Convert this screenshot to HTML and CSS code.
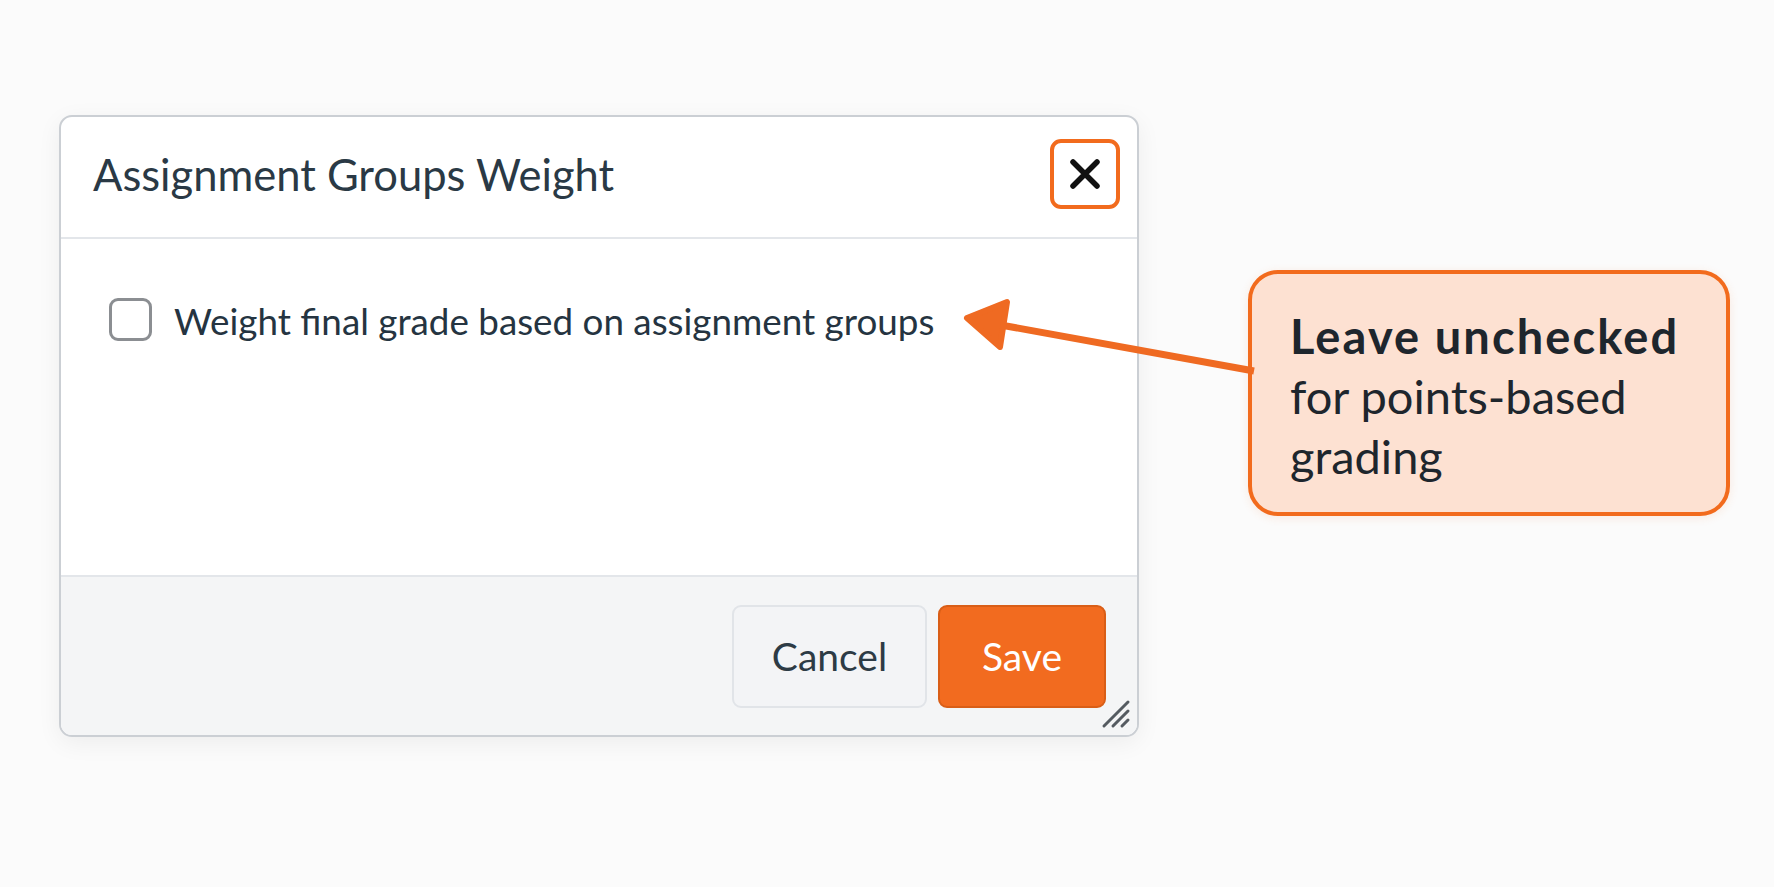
FILE: index.html
```html
<!DOCTYPE html>
<html lang="en">
<head>
  <meta charset="UTF-8">
  <meta name="viewport" content="width=device-width, initial-scale=1.0">
  <title>Assignment Groups Weight</title>
  <link rel="stylesheet" href="styles.css">
</head>
<body>
  <div class="stage">
    <div class="dialog">
      <div class="dialog-header">
        <h2 class="dialog-title">Assignment Groups Weight</h2>
        <button class="close-btn" aria-label="Close">
          <svg width="32" height="32" viewBox="0 0 32 32">
            <path d="M4 4 L28 28 M28 4 L4 28" stroke="#111" stroke-width="5.5" stroke-linecap="round" fill="none"/>
          </svg>
        </button>
      </div>
      <div class="dialog-body">
        <label class="check-row">
          <span class="checkbox"></span>
          <span class="check-label">Weight final grade based on assignment groups</span>
        </label>
      </div>
      <div class="dialog-footer">
        <button class="btn btn-cancel">Cancel</button>
        <button class="btn btn-save">Save</button>
      </div>
      <!-- resize grip in the corner -->
      <svg class="grip" width="30" height="30" viewBox="0 0 30 30">
        <path d="M3 27 L27 3 M12 27 L27 12 M21 27 L27 21" stroke="#555b61" stroke-width="3" stroke-linecap="round"/>
      </svg>
    </div>

    <div class="callout">
      <p><strong>Leave unchecked</strong><br>for points-based<br>grading</p>
    </div>

    <!-- pointer from the note to the checkbox label -->
    <svg class="pointer" width="1774" height="887" viewBox="0 0 1774 887">
      <line x1="995" y1="324" x2="1254" y2="371" stroke="#ef6a22" stroke-width="7"/>
      <polygon points="967,318 1007,302 1000,347" fill="#ef6a22" stroke="#ef6a22" stroke-width="6" stroke-linejoin="round"/>
    </svg>
  </div>
</body>
</html>
```

FILE: styles.css
```css
* {
  box-sizing: border-box;
}
body {
  margin: 0;
  background: #fbfbfb;
  font-family: Lato, "Noto Sans", sans-serif;
  color: #2d3b45;
}
.stage {
  position: relative;
  width: 1774px;
  height: 887px;
  display: flex;
  align-items: flex-start;
  padding: 115px 0 0 59px;
}
.dialog {
  position: relative;
  width: 1080px;
  height: 622px;
  background: #fff;
  border: 2px solid #cbcfd4;
  border-radius: 13px;
  box-shadow: 0 6px 24px rgba(0, 0, 0, 0.06);
  display: flex;
  flex-direction: column;
  overflow: hidden;
}
.dialog-header {
  height: 122px;
  flex: none;
  display: flex;
  align-items: center;
  justify-content: space-between;
  padding: 0 17px 6px 32px;
  border-bottom: 2px solid #e3e6ea;
}
.dialog-title {
  margin: 0;
  font-size: 43.5px;
  font-weight: 400;
  color: #2a3945;
}
.close-btn {
  width: 70px;
  height: 70px;
  border: 4px solid #f26b1d;
  border-radius: 11px;
  background: #fff;
  display: flex;
  align-items: center;
  justify-content: center;
  padding: 0;
}
.dialog-body {
  flex: 1;
  padding: 57px 0 0 48px;
}
.check-row {
  display: flex;
  align-items: center;
  gap: 22px;
}
.checkbox {
  width: 43px;
  height: 43px;
  border: 3px solid #8b8e92;
  border-radius: 9px;
  background: #fff;
}
.check-label {
  font-size: 36.8px;
  color: #253441;
  padding-top: 3px;
}
.dialog-footer {
  height: 160px;
  flex: none;
  background: #f4f5f6;
  border-top: 2px solid #e3e6ea;
  display: flex;
  align-items: center;
  justify-content: flex-end;
  gap: 11px;
  padding: 0 31px 0 0;
}
.btn {
  height: 103px;
  border-radius: 9px;
  font-family: Lato, "Noto Sans", sans-serif;
  font-size: 39px;
  padding: 0;
}
.btn-cancel {
  width: 195px;
  background: #f3f4f6;
  border: 2px solid #e1e4e8;
  color: #2d3b45;
}
.btn-save {
  width: 168px;
  background: #f26b1f;
  border: 2px solid #d95e17;
  color: #fff;
}
.grip {
  position: absolute;
  right: 6px;
  bottom: 6px;
}
.callout {
  width: 482px;
  height: 246px;
  margin: 155px 0 0 109px;
  background: #fde1d2;
  border: 4px solid #f26b1d;
  border-radius: 30px;
  box-shadow: 0 2px 10px rgba(242, 107, 29, 0.12);
  display: flex;
  align-items: center;
  padding: 5px 10px 0 38px;
}
.callout p {
  margin: 0;
  font-size: 47px;
  line-height: 60px;
  color: #1e262d;
  white-space: nowrap;
}
.callout strong {
  font-weight: 700;
  letter-spacing: 2.1px;
}
.pointer {
  position: absolute;
  left: 0;
  top: 0;
  pointer-events: none;
}
```
